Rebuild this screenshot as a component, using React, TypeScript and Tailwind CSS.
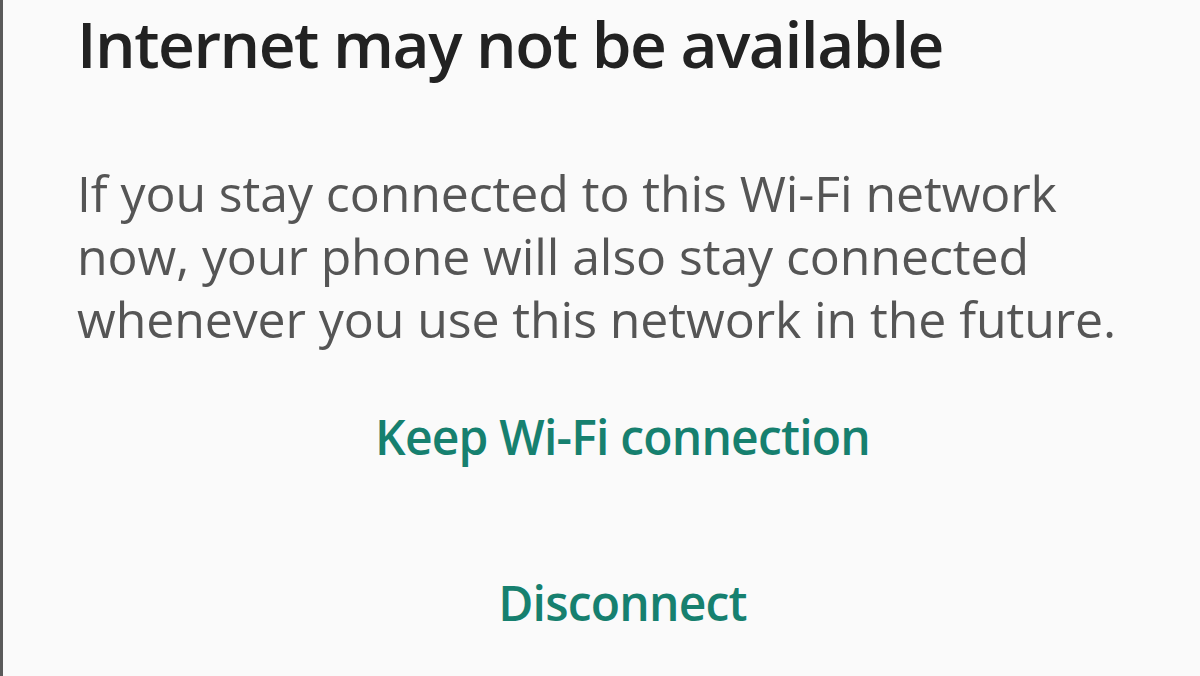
export default function App() {
  return (
    <div className="h-[676px] w-[1200px] overflow-hidden border-l-[3px] border-[#5a5a5a] bg-[#fafafa] font-['Open_Sans',sans-serif]">
      <div className="pl-[74px] pr-[40px]">
        <h1 className="text-[64px] font-semibold leading-[88px] tracking-[-1.5px] text-[#222222]">
          Internet may not be available
        </h1>
        <p className="mt-[74px] text-[50px] leading-[63px] tracking-[-0.1px] text-[#555555]">
          If you stay connected to this Wi-Fi network now, your phone will also stay connected whenever you use this network in the future.
        </p>
      </div>
      <div className="mt-[51px] flex flex-col items-center pl-[42px]">
        <button className="text-[48px] font-semibold leading-[70px] tracking-[-0.8px] text-[#16806f]">Keep Wi-Fi connection</button>
        <button className="mt-[96px] text-[48px] font-semibold leading-[70px] tracking-[-0.8px] text-[#16806f]">Disconnect</button>
      </div>
    </div>
  );
}
